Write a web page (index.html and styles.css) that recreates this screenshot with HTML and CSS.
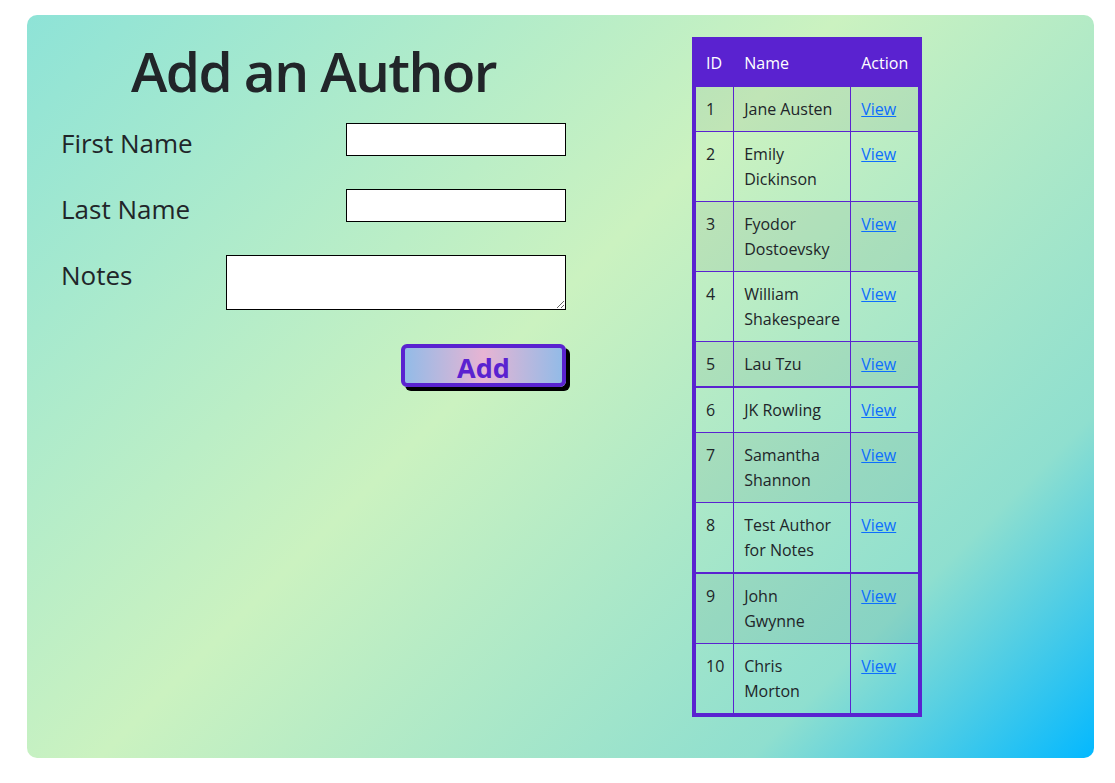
FILE: index.html
```html
<!DOCTYPE html>
<html lang="en">
<head>
<meta charset="utf-8">
<title>Add an Author</title>
<link rel="stylesheet" href="styles.css">
</head>
<body>
<main class="panel">
  <section class="form-col">
    <h1 class="title">Add an Author</h1>
    <form class="author-form">
      <div class="form-row">
        <label class="form-label" for="first">First Name</label>
        <input class="text-input" id="first" type="text">
      </div>
      <div class="form-row">
        <label class="form-label" for="last">Last Name</label>
        <input class="text-input" id="last" type="text">
      </div>
      <div class="form-row">
        <label class="form-label" for="notes">Notes</label>
        <textarea class="notes-input" id="notes"></textarea>
      </div>
      <div class="form-actions">
        <button class="add-btn" type="button">Add</button>
      </div>
    </form>
  </section>
  <table class="authors">
    <colgroup>
      <col class="c-id"><col class="c-name"><col class="c-act">
    </colgroup>
    <thead>
      <tr><th>ID</th><th>Name</th><th>Action</th></tr>
    </thead>
    <tbody>
      <tr><td>1</td><td>Jane Austen</td><td><a href="#">View</a></td></tr>
      <tr><td>2</td><td>Emily Dickinson</td><td><a href="#">View</a></td></tr>
      <tr><td>3</td><td>Fyodor Dostoevsky</td><td><a href="#">View</a></td></tr>
      <tr><td>4</td><td>William Shakespeare</td><td><a href="#">View</a></td></tr>
      <tr class="thick"><td>5</td><td>Lau Tzu</td><td><a href="#">View</a></td></tr>
      <tr><td>6</td><td>JK Rowling</td><td><a href="#">View</a></td></tr>
      <tr><td>7</td><td>Samantha Shannon</td><td><a href="#">View</a></td></tr>
      <tr class="thick"><td>8</td><td>Test Author for Notes</td><td><a href="#">View</a></td></tr>
      <tr><td>9</td><td>John Gwynne</td><td><a href="#">View</a></td></tr>
      <tr><td>10</td><td>Chris Morton</td><td><a href="#">View</a></td></tr>
    </tbody>
  </table>
</main>
</body>
</html>
```

FILE: styles.css
```css
html, body {
  margin: 0;
  padding: 0;
  background: #ffffff;
}

body {
  font-family: "Segoe UI", "Open Sans", "Noto Sans", sans-serif;
  color: #212529;
  font-size: 16px;
}

.panel {
  box-sizing: border-box;
  margin: 15px 21px 0 27px;
  height: 743px;
  border-radius: 10px;
  background: linear-gradient(135deg, #8ee3d7 0%, #cbf2c0 45%, #8fdfcf 81%, #03b8ff 100%);
  display: flex;
  align-items: flex-start;
  padding: 22px 0 0 34px;
}

.form-col {
  width: 505px;
  flex: none;
}

.title {
  margin: 0;
  font-size: 55px;
  font-weight: 600;
  letter-spacing: -1.6px;
  line-height: 67px;
  text-align: center;
  color: #212529;
}

.author-form {
  margin-top: 19px;
  display: flex;
  flex-direction: column;
  gap: 33px;
}

.form-row {
  display: flex;
  justify-content: space-between;
  align-items: flex-start;
}

.form-label {
  font-size: 26px;
  line-height: 26px;
  padding-top: 7px;
}

.text-input {
  box-sizing: border-box;
  width: 220px;
  height: 33px;
  border: 1px solid #000;
  background: #fff;
  margin: 0;
  padding: 2px 4px;
}

.notes-input {
  box-sizing: border-box;
  width: 340px;
  height: 55px;
  border: 1px solid #000;
  background: #fff;
  margin: 0;
  padding: 2px 4px;
}

.form-actions {
  display: flex;
  justify-content: flex-end;
  margin-top: 1px;
}

.add-btn {
  box-sizing: border-box;
  width: 165px;
  height: 43px;
  border: 4px solid #5a22d0;
  border-radius: 6px;
  background: linear-gradient(to right, #93bbe7 0%, #e7b4d3 50%, #93bbe7 100%);
  box-shadow: 4px 4px 0 #000;
  color: #5a22d0;
  font-family: "Segoe UI", "Open Sans", "Noto Sans", sans-serif;
  font-size: 27px;
  font-weight: 700;
  line-height: 1;
  padding: 3px 0 0;
  cursor: pointer;
}

.authors {
  margin-left: 126px;
  flex: none;
  width: 230px;
  table-layout: fixed;
  border-collapse: collapse;
  border: 4px solid #5a22d0;
}

.c-id { width: 39px; }
.c-name { width: 115px; }
.c-act { width: 68px; }

.authors th {
  background: #5a22d0;
  color: #fff;
  font-weight: 400;
  text-align: left;
  padding: 10px 4px 10px 10px;
  line-height: 25px;
  border: 1px solid #5a22d0;
}

.authors td {
  padding: 10px 9px 9px 10px;
  line-height: 25px;
  vertical-align: top;
  border: 1px solid #5a22d0;
}

.authors tbody tr:nth-child(odd) td {
  background: rgba(0, 0, 0, 0.05);
}

.authors tr.thick td {
  border-bottom: 2px solid #5a22d0;
}

.authors a {
  color: #0d6efd;
  text-decoration: underline;
}
```
